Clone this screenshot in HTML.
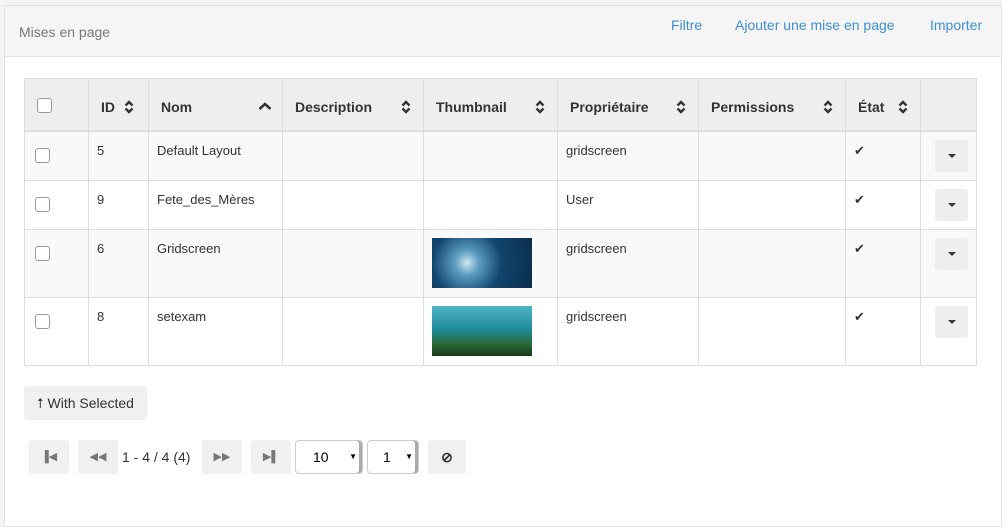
<!DOCTYPE html><html><head><meta charset="utf-8"><style>
body{margin:0;background:#f3f3f3;font-family:"Liberation Sans",sans-serif;width:1002px;height:513px;overflow:hidden}
.panel{position:absolute;left:4px;top:5px;width:996px;height:520px;background:#fff;border:1px solid #e3e3e3}
.head{height:50px;background:#f5f5f5;border-bottom:1px solid #e5e5e5;position:relative}
.head .t{position:absolute;left:14px;top:18px;font-size:14px;color:#777}
.head a{position:absolute;top:11px;font-size:14px;color:#3f8fd2}
table{position:absolute;left:24px;top:78px;border-collapse:collapse;font-size:13px;color:#333}
td,th{border:1px solid #ddd;padding:0 8px;vertical-align:top;text-align:left}
th{background:#eee;height:52px;border-bottom:2px solid #ddd;vertical-align:middle;font-size:14px;position:relative;padding:5px 12px 0 12px;box-sizing:border-box}
td{padding-top:11px}
tr.o td{background:#f9f9f9}
.cb{display:inline-block;width:13px;height:13px;border:1px solid #999;border-radius:3px;background:#fff}
.s{position:absolute;right:12px;top:21px;width:10px;height:14px}
.dd{width:33px;height:32px;background:#eee;border-radius:3px;margin:-3px 0 0 6px;position:relative}
.dd:after{content:"";position:absolute;left:13px;top:14px;border:4px solid transparent;border-top:4px solid #333;border-bottom:0}
.thumb{width:100px;height:50px;margin:-3px 0 0 0}
.btn{position:absolute;background:#f1f0ef;border-radius:3px;font-size:14px;color:#333}
.sel{position:absolute;top:440px;height:32px;border:1px solid #ccc;border-radius:4px;background:#fff;font-size:14px;box-shadow:inset -3px 0 0 #aaa}
</style></head><body><div class="panel">
<div class="head"><span class="t">Mises en page</span>
<a style="left:666px">Filtre</a><a style="left:730px">Ajouter une mise en page</a><a style="left:925px">Importer</a></div>
</div>
<svg width="0" height="0" style="position:absolute"><defs><g id="ud"><path d="M1.5 5.5L5 2L8.5 5.5M1.5 8.5L5 12L8.5 8.5" fill="none" stroke="#333" stroke-width="2.4"/></g></defs></svg>
<table>
<tr><th style="width:64px"><span class="cb"></span></th><th style="width:60px">ID<svg class="s" style="right:14px"><use href="#ud"/></svg></th><th style="width:134px">Nom<svg class="s" style="right:10px;width:14px"><path d="M1.5 9L7 4L12.5 9" fill="none" stroke="#333" stroke-width="2.6"/></svg></th><th style="width:141px">Description<svg class="s"><use href="#ud"/></svg></th><th style="width:134px">Thumbnail<svg class="s"><use href="#ud"/></svg></th><th style="width:141px">Propriétaire<svg class="s"><use href="#ud"/></svg></th><th style="width:147px">Permissions<svg class="s"><use href="#ud"/></svg></th><th style="width:75px">État<svg class="s"><use href="#ud"/></svg></th><th style="width:56px"></th></tr>
<tr class="o" style="height:50px"><td><span class="cb" style="margin:5px 0 0 2px"></span></td><td>5</td><td>Default Layout</td><td></td><td></td><td>gridscreen</td><td></td><td>✔</td><td><div class="dd"></div></td></tr>
<tr style="height:49px"><td><span class="cb" style="margin:5px 0 0 2px"></span></td><td>9</td><td>Fete_des_Mères</td><td></td><td></td><td>User</td><td></td><td>✔</td><td><div class="dd"></div></td></tr>
<tr class="o" style="height:68px"><td><span class="cb" style="margin:5px 0 0 2px"></span></td><td>6</td><td>Gridscreen</td><td></td><td><div class="thumb" style="background:radial-gradient(circle at 35% 50%,#cfe6f0 0,#5a9bbf 18%,#12456e 50%,#0a2d4c 100%)"></div></td><td>gridscreen</td><td></td><td>✔</td><td><div class="dd"></div></td></tr>
<tr style="height:68px"><td><span class="cb" style="margin:5px 0 0 2px"></span></td><td>8</td><td>setexam</td><td></td><td><div class="thumb" style="background:linear-gradient(#4fb4c4,#1f8ea0 45%,#2a6a3a 75%,#1a3a1a)"></div></td><td>gridscreen</td><td></td><td>✔</td><td><div class="dd"></div></td></tr>
</table>
<div class="btn" style="left:24px;top:386px;width:123px;height:34px;line-height:34px;text-align:center">⭡ With Selected</div>
<div class="btn" style="left:29px;top:440px;width:40px;height:34px;line-height:34px;text-align:center;color:#777;font-size:11px">▐◀</div>
<div class="btn" style="left:78px;top:440px;width:40px;height:34px;line-height:34px;text-align:center;color:#777;font-size:11px">◀◀</div>
<span style="position:absolute;left:122px;top:449px;font-size:14px;color:#333">1 - 4 / 4 (4)</span>
<div class="btn" style="left:202px;top:440px;width:40px;height:34px;line-height:34px;text-align:center;color:#777;font-size:11px">▶▶</div>
<div class="btn" style="left:251px;top:440px;width:40px;height:34px;line-height:34px;text-align:center;color:#777;font-size:11px">▶▌</div>
<div class="sel" style="left:295px;width:66px;line-height:32px"><span style="margin-left:17px">10</span><span style="position:absolute;right:5px;font-size:8px">▼</span></div>
<div class="sel" style="left:367px;width:50px;line-height:32px"><span style="margin-left:15px">1</span><span style="position:absolute;right:5px;font-size:8px">▼</span></div>
<div class="btn" style="left:428px;top:440px;width:38px;height:34px;line-height:34px;text-align:center;font-weight:bold">⊘</div>
</body></html>
